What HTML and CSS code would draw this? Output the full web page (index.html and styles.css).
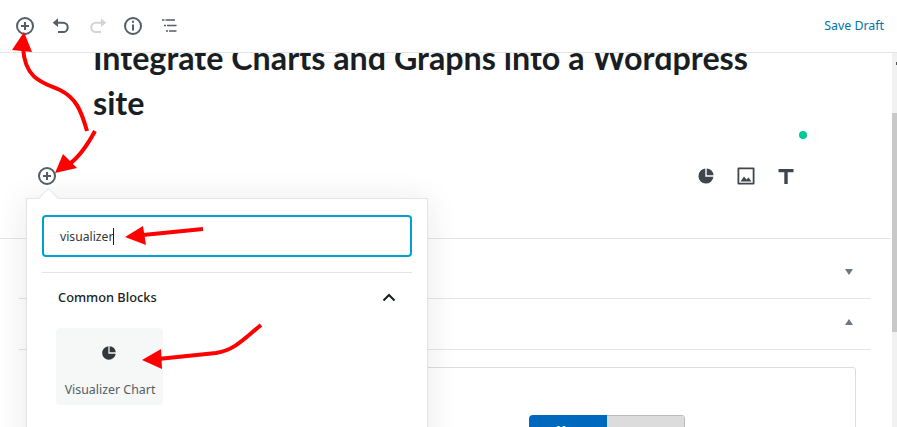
FILE: index.html
```html
<!DOCTYPE html>
<html lang="en">
<head>
    <meta charset="UTF-8">
    <meta name="viewport" content="width=device-width, initial-scale=1.0">
    <title>Edit Post</title>
    <link rel="stylesheet" href="styles.css">
</head>
<body>
    <div class="editor">
        <header class="toolbar">
            <div class="toolbar-tools">
                <svg class="tool" viewBox="0 0 24 24"><circle cx="12" cy="12" r="8"/><path d="M12 8v8M8 12h8"/></svg>
                <svg class="tool" viewBox="0 0 24 24"><path class="tool-head" d="M9 4.300 3.700 8.700 9 13z"/><path d="M9 8.700h5a4.700 4.700 0 0 1 0 9.400H9"/></svg>
                <svg class="tool tool-off" viewBox="0 0 24 24"><path class="tool-head" d="M16 4.300l5.300 4.400-5.300 4.300z"/><path d="M16 8.700h-5a4.700 4.700 0 0 0 0 9.400h5"/></svg>
                <svg class="tool" viewBox="0 0 24 24"><circle cx="12" cy="12" r="8"/><path d="M12 10.500v6M12 6.800v2"/></svg>
                <svg class="tool tool-thin" viewBox="0 0 24 24"><path d="M5 6h2.500M8.500 6h9.500M7 11.500h2M10 11.500h9.500M9 17h2M12 17h7.500"/></svg>
            </div>
            <a class="save-draft">Save Draft</a>
        </header>
        <main class="content">
            <h1 class="post-title">Integrate Charts and Graphs into a Wordpress site</h1>
            <div class="block-row">
                <svg class="tool inserter" viewBox="0 0 24 24"><circle cx="12" cy="12" r="8"/><path d="M12 8v8M8 12h8"/></svg>
                <span class="status-dot"></span>
                <div class="block-shortcuts">
                    <svg class="shortcut" viewBox="0 0 20 20"><path d="M9.300 2.600a7.500 7.500 0 1 0 8.100 8.100H9.300z"/><path d="M10.700 2.500v6.800h6.800a7 7 0 0 0-6.800-6.800z"/></svg>
                    <svg class="shortcut" viewBox="0 0 20 20"><path fill-rule="evenodd" d="M2.500 1.500h15a1 1 0 0 1 1 1v15a1 1 0 0 1-1 1h-15a1 1 0 0 1-1-1v-15a1 1 0 0 1 1-1zM3.300 3.300v13.400h13.400V3.300zM4.500 15.500l3.500-5 2.500 3 2-2 3 4z"/></svg>
                    <svg class="shortcut" viewBox="0 0 20 20"><path d="M2.500 3h15v3.200h-5.800V18H8.300V6.200H2.500z"/></svg>
                </div>
            </div>
            <div class="divider"></div>
            <section class="meta-panel meta-first">
                <span class="caret caret-down"></span>
            </section>
            <section class="meta-panel">
                <span class="caret caret-up"></span>
            </section>
            <section class="chart-card">
                <div class="toggle">
                    <span class="toggle-on">Yes</span>
                    <span class="toggle-off"></span>
                </div>
            </section>
        </main>
        <div class="inserter-popover">
            <div class="search-box">
                <span class="search-text">visualizer</span>
            </div>
            <div class="panel-title">
                <span>Common Blocks</span>
                <svg class="chevron" viewBox="0 0 14 9"><path d="M1.500 7.500 7 2l5.500 5.500"/></svg>
            </div>
            <div class="block-item">
                <svg class="block-item-icon" viewBox="0 0 20 20"><path d="M9.300 2.600a7.500 7.500 0 1 0 8.100 8.100H9.300z"/><path d="M10.700 2.500v6.800h6.800a7 7 0 0 0-6.800-6.800z"/></svg>
                <span class="block-item-label">Visualizer Chart</span>
            </div>
        </div>
        <div class="scrollbar"><span class="scroll-arrow"></span><span class="scroll-thumb"></span></div>
        <!-- red annotations drawn over the screenshot -->
        <svg class="annotations" viewBox="0 0 897 427">
            <path d="M87 131C81 110 76 98 60 90C44 83 25 80 23 48"/>
            <path d="M95 131C88 144 80 157 68 165"/>
            <path d="M203 229L143 235"/>
            <path d="M261 325C245 338 235 350 216 353L158 359"/>
            <polygon class="head" points="24,32 12,50 32,52"/>
            <polygon class="head" points="55,173 77,168 63,154"/>
            <polygon class="head" points="125,237 143,226 146,245"/>
            <polygon class="head" points="142,360 161,349 162,369"/>
        </svg>
    </div>
</body>
</html>
```

FILE: styles.css
```css
* {
    box-sizing: border-box;
}

html, body {
    margin: 0;
    height: 100%;
    overflow: hidden;
}

body {
    font-family: "Noto Sans", sans-serif;
    font-size: 13px;
    color: #23282d;
    background: #fff;
}

.editor {
    position: relative;
    width: 897px;
    height: 427px;
    overflow: hidden;
}

.toolbar {
    height: 53px;
    display: flex;
    align-items: center;
    justify-content: space-between;
    padding: 0 13px 1px 13px;
    border-bottom: 1px solid #e2e4e7;
    background: #fff;
    position: relative;
    z-index: 2;
}

.toolbar-tools {
    display: flex;
    gap: 12px;
}

.tool {
    width: 24px;
    height: 24px;
    fill: none;
    stroke: #555d66;
    stroke-width: 2;
}

.tool-head {
    fill: #555d66;
    stroke: none;
}

.tool-off {
    stroke: #d2d4d7;
}

.tool-off .tool-head {
    fill: #d2d4d7;
}

.tool-thin {
    stroke-width: 1.5;
}

.save-draft {
    color: #0073aa;
    font-size: 12.4px;
}

.content {
    height: 374px;
    overflow: hidden;
}

.post-title {
    width: 680px;
    margin: -18px 0 0 93px;
    font-family: Lato, sans-serif;
    font-size: 32.25px;
    font-weight: 700;
    line-height: 45px;
    color: #191e23;
}

.block-row {
    height: 113px;
    position: relative;
    display: flex;
    align-items: flex-start;
    padding: 39px 0 0 35px;
}

.status-dot {
    position: absolute;
    left: 799px;
    top: 6px;
    width: 8px;
    height: 8px;
    border-radius: 50%;
    background: #00c89a;
}

.block-shortcuts {
    margin-left: 637px;
    display: flex;
    gap: 20px;
    padding-top: 2px;
}

.shortcut {
    width: 20px;
    height: 20px;
    fill: #40464d;
}

.divider {
    height: 1px;
    margin-right: 6px;
    background: #e2e4e7;
}

.meta-panel {
    height: 51px;
    margin: 0 26px 0 19px;
    border-bottom: 1px solid #e2e4e7;
    position: relative;
}

.meta-first {
    height: 60px;
}

.caret {
    position: absolute;
    right: 18px;
    width: 0;
    height: 0;
    border-left: 4px solid transparent;
    border-right: 4px solid transparent;
}

.caret-down {
    top: 30px;
    border-top: 6px solid #6c7781;
}

.caret-up {
    top: 20px;
    border-bottom: 6px solid #6c7781;
}

.chart-card {
    margin: 17px 41px 0 30px;
    height: 120px;
    border: 1px solid #ddd;
    border-radius: 3px;
    padding: 47px 0 0 498px;
}

.toggle {
    display: flex;
    width: 156px;
    height: 40px;
    border-radius: 4px;
    overflow: hidden;
}

.toggle-on {
    width: 78px;
    background: #0069bd;
    color: #fff;
    text-align: center;
    font-weight: 700;
    line-height: 30px;
}

.toggle-off {
    flex: 1;
    background: #dcdcdc;
    border: 1px solid #bbb;
    border-left: 0;
}

.inserter-popover {
    position: absolute;
    left: 26px;
    top: 198px;
    width: 402px;
    height: 260px;
    padding: 16px 15px;
    background: #fff;
    border: 1px solid #e2e4e7;
    box-shadow: 0 3px 30px rgba(25, 30, 35, 0.1);
    z-index: 1;
}

.inserter-popover::before {
    content: "";
    position: absolute;
    left: 14px;
    top: -8px;
    width: 14px;
    height: 14px;
    transform: rotate(45deg);
    background: #fff;
    border-left: 1px solid #e2e4e7;
    border-top: 1px solid #e2e4e7;
}

.search-box {
    position: relative;
    height: 42px;
    border: 2px solid #00a0d2;
    border-radius: 4px;
    padding: 0 16px;
    line-height: 40px;
    font-size: 12.2px;
    color: #32373c;
}

.search-text {
    border-right: 1px solid #191e23;
}

.panel-title {
    margin-top: 15px;
    border-top: 1px solid #e2e4e7;
    height: 56px;
    display: flex;
    align-items: center;
    justify-content: space-between;
    padding: 0 16px 7px 16px;
    font-size: 12.8px;
    font-weight: 500;
    color: #191e23;
}

.chevron {
    width: 14px;
    height: 9px;
    fill: none;
    stroke: #191e23;
    stroke-width: 2;
}

.block-item {
    width: 107px;
    height: 77px;
    margin-left: 14px;
    background: #f6f7f7;
    border-radius: 4px;
    display: flex;
    flex-direction: column;
    align-items: center;
    padding-top: 16px;
}

.block-item-icon {
    width: 18px;
    height: 18px;
    margin-right: 1px;
    fill: #32373c;
}

.block-item-label {
    margin-top: 19px;
    margin-left: 1px;
    font-size: 12.4px;
    color: #555d66;
}

.scrollbar {
    position: absolute;
    right: 0;
    top: 53px;
    bottom: 0;
    width: 5px;
    background: #f1f1f1;
    z-index: 3;
}

.scroll-arrow {
    position: absolute;
    left: 4px;
    top: 9px;
    width: 1px;
    height: 3px;
    background: #555;
}

.scroll-thumb {
    position: absolute;
    left: 0;
    top: 60px;
    width: 5px;
    height: 219px;
    background: #c8c8c8;
}

.annotations {
    position: absolute;
    left: 0;
    top: 0;
    width: 897px;
    height: 427px;
    z-index: 4;
    pointer-events: none;
    fill: none;
    stroke: #f00;
    stroke-width: 4;
}

.annotations .head {
    fill: #f00;
    stroke: none;
}
```
